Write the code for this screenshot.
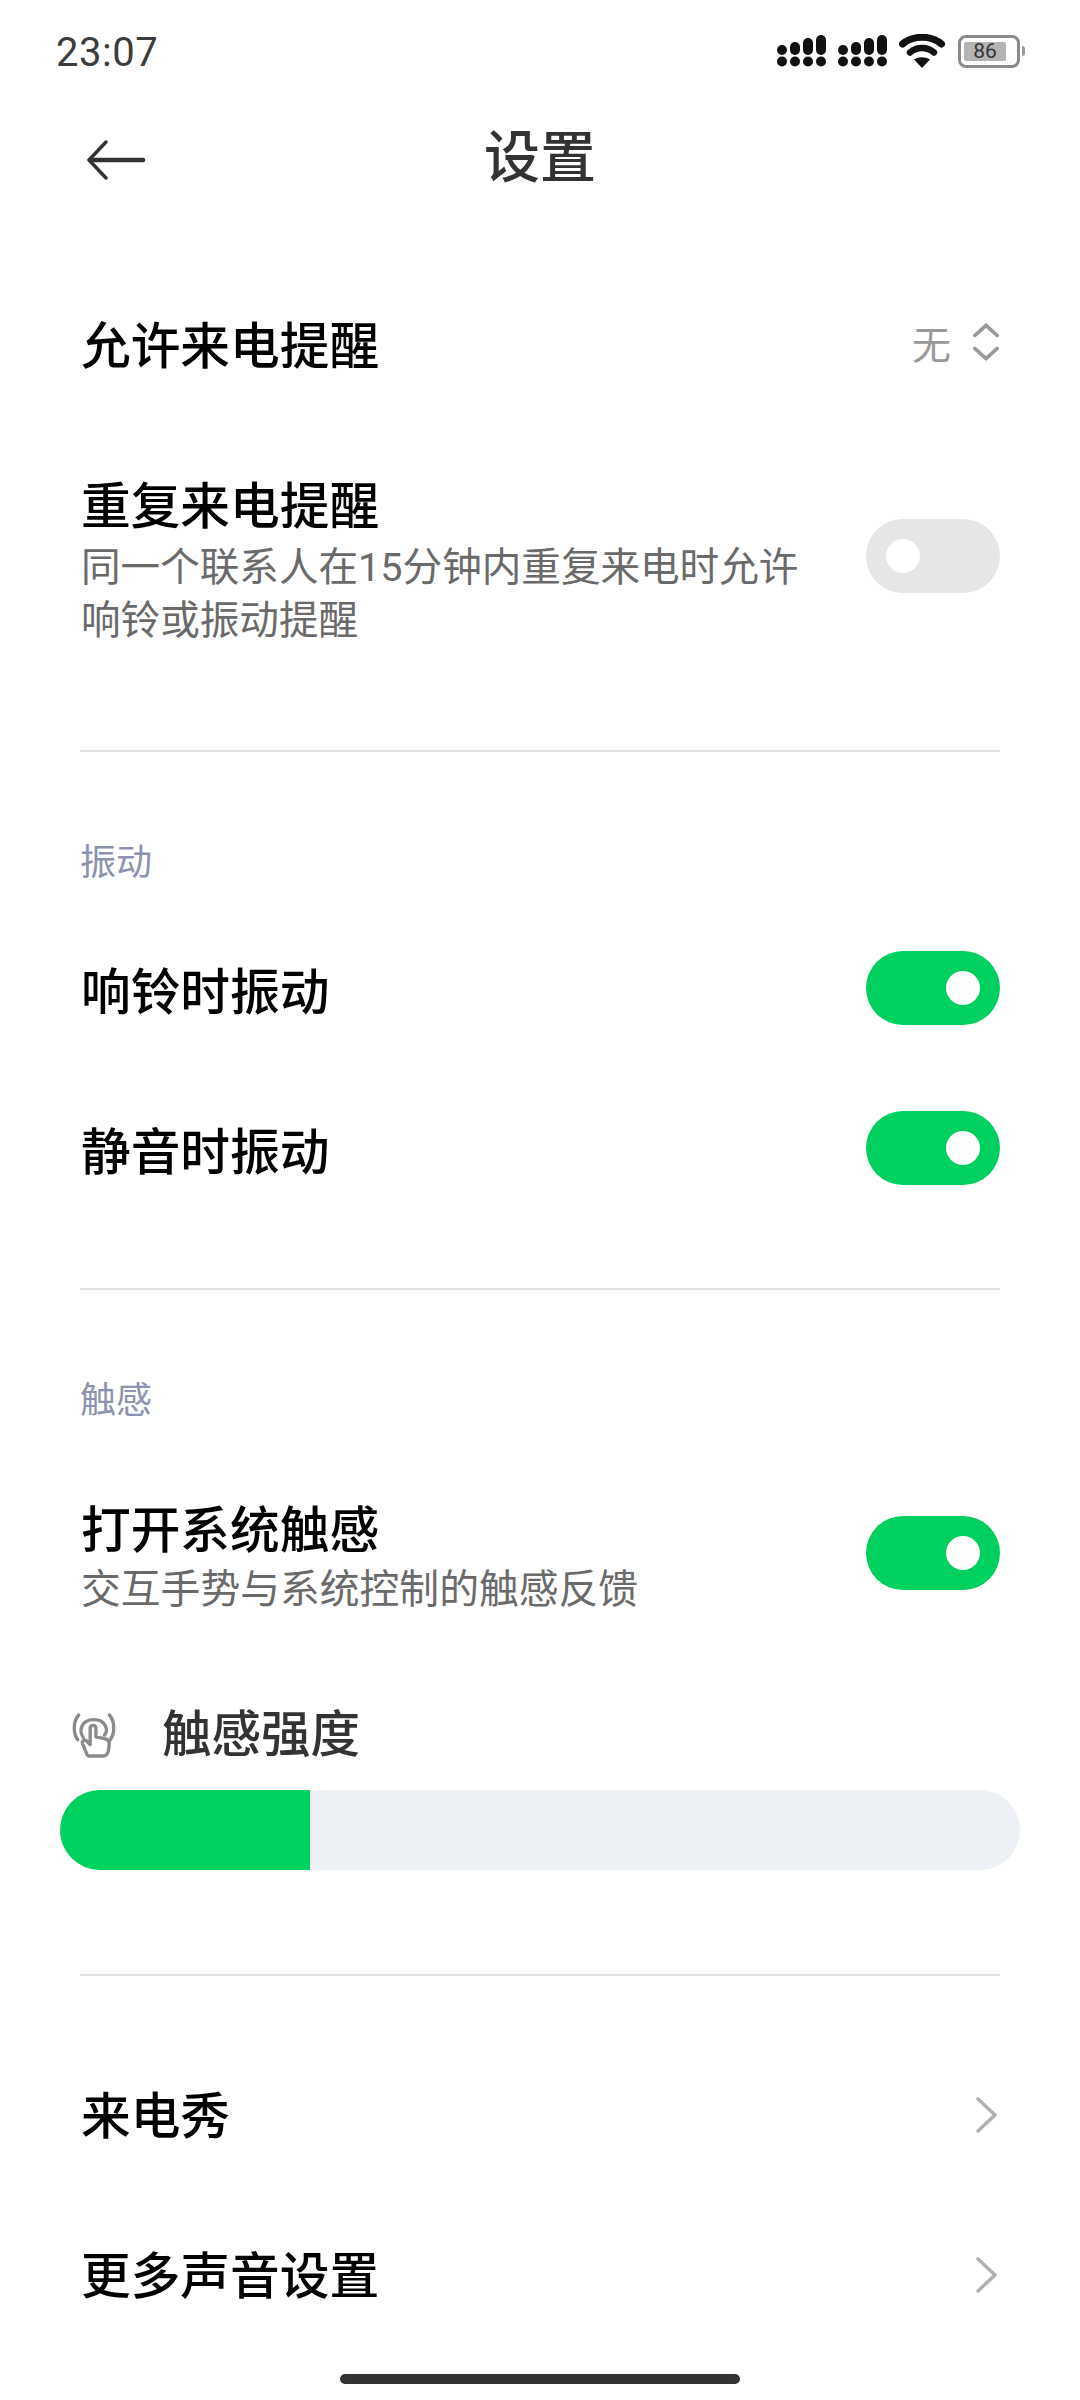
<div class="page">
  <div class="status">
    <span class="time">23:07</span>
    <div class="status-icons">
      <svg class="signal" width="49" height="32" viewBox="0 0 49 32" fill="#111">
        <rect x="0" y="10" width="10" height="10" rx="5"/><rect x="13" y="7" width="10" height="13" rx="5"/><rect x="26" y="3" width="10" height="17" rx="5"/><rect x="39" y="0" width="10" height="20" rx="5"/>
        <circle cx="5" cy="26.5" r="5"/><circle cx="18" cy="26.5" r="5"/><circle cx="31" cy="26.5" r="5"/><circle cx="44" cy="26.5" r="5"/>
      </svg>
      <svg class="signal" width="49" height="32" viewBox="0 0 49 32" fill="#111">
        <rect x="0" y="10" width="10" height="10" rx="5"/><rect x="13" y="7" width="10" height="13" rx="5"/><rect x="26" y="3" width="10" height="17" rx="5"/><rect x="39" y="0" width="10" height="20" rx="5"/>
        <circle cx="5" cy="26.5" r="5"/><circle cx="18" cy="26.5" r="5"/><circle cx="31" cy="26.5" r="5"/><circle cx="44" cy="26.5" r="5"/>
      </svg>
      <svg class="wifi" width="46" height="34" viewBox="0 0 46 34">
        <path d="M3.5 10 C14 1 32 1 42.5 10" fill="none" stroke="#111" stroke-width="7" stroke-linecap="round"/>
        <path d="M11 18.5 C18 12.5 28 12.5 35 18.5" fill="none" stroke="#111" stroke-width="6.5" stroke-linecap="round"/>
        <path d="M15 25.5 C20 22.5 26 22.5 31 25.5 L23 34 Z" fill="#111"/>
      </svg>
      <div class="battery">
        <div class="batt-body"><span class="batt-fill">86</span></div>
        <div class="batt-tip"></div>
      </div>
    </div>
  </div>

  <header class="header">
    <svg class="back" width="60" height="40" viewBox="0 0 60 40" fill="none" stroke="#333" stroke-linecap="round" stroke-linejoin="round">
      <path d="M20 2 L3 20 L20 38" stroke-width="3.4"/>
      <path d="M4 20 H57" stroke-width="4.5"/>
    </svg>
    <h1>设置</h1>
  </header>

  <section class="group first">
    <div class="row r-single">
      <span class="title">允许来电提醒</span>
      <div class="picker">
        <span class="picker-val">无</span>
        <svg width="26" height="40" viewBox="0 0 28 40" fill="none" stroke="#999" stroke-width="4" stroke-linecap="round" stroke-linejoin="round">
          <path d="M2 13 L14 2 L26 13"/><path d="M2 27 L14 38 L26 27"/>
        </svg>
      </div>
    </div>
    <div class="row r-two">
      <div class="texts">
        <div class="title">重复来电提醒</div>
        <div class="sub">同一个联系人在<span class="num">15</span>分钟内重复来电时允许<br/>响铃或振动提醒</div>
      </div>
      <div class="toggle"><i></i></div>
    </div>
  </section>

  <hr class="d1" />

  <section class="group">
    <div class="label">振动</div>
    <div class="row r-toggle">
      <span class="title">响铃时振动</span>
      <div class="toggle on"><i></i></div>
    </div>
    <div class="row r-toggle">
      <span class="title">静音时振动</span>
      <div class="toggle on"><i></i></div>
    </div>
  </section>

  <hr class="d2" />

  <section class="group">
    <div class="label">触感</div>
    <div class="row r-haptic">
      <div class="texts">
        <div class="title">打开系统触感</div>
        <div class="sub">交互手势与系统控制的触感反馈</div>
      </div>
      <div class="toggle on"><i></i></div>
    </div>
    <div class="strength">
      <svg width="44" height="48" viewBox="0 0 46 48" fill="none" stroke="#8a8a8a" stroke-width="3.5" stroke-linecap="round" stroke-linejoin="round">
        <path d="M7 3 C1 10 1 22 6 29"/>
        <path d="M39 3 C45 10 45 22 40 29"/>
        <path d="M12 27 C7 20 9 8 23 8 C36 8 38 20 34 24"/>
        <path d="M16 45 L11 33 C10 30 14 28 16 31 L19 34 V17 C19 13 25 13 25 17 V26 L35 28 C38 29 39 31 39 33 L38 41 C37 44 36 46 33 46 H17"/>
      </svg>
      <span>触感强度</span>
    </div>
    <div class="slider"><div class="fill"></div></div>
  </section>

  <hr class="d3" />

  <section class="group links">
    <div class="row r-link">
      <span class="title">来电秀</span>
      <svg width="21" height="36" viewBox="0 0 21 36" fill="none" stroke="#b0b0b0" stroke-width="3.5" stroke-linecap="round" stroke-linejoin="round"><path d="M2 2 L19 18 L2 34"/></svg>
    </div>
    <div class="row r-link">
      <span class="title">更多声音设置</span>
      <svg width="21" height="36" viewBox="0 0 21 36" fill="none" stroke="#b0b0b0" stroke-width="3.5" stroke-linecap="round" stroke-linejoin="round"><path d="M2 2 L19 18 L2 34"/></svg>
    </div>
  </section>

  <div class="home"></div>
</div>

<style>
  :global(body) { margin: 0; background: #fff; }
  .page {
    width: 1080px; height: 2400px; overflow: hidden; position: relative; background: #fff;
    font-family: "Noto Sans CJK SC", sans-serif; color: #000;
  }
  .num { font-family: Roboto, sans-serif; line-height: 1; }
  .status {
    height: 104px; display: flex; align-items: center; justify-content: space-between;
    padding: 0 55px 0 56px; box-sizing: border-box;
  }
  .time { font-family: Roboto, sans-serif; font-size: 40px; letter-spacing: 0.5px; color: #3c3c3c; }
  .status-icons { display: flex; align-items: center; gap: 11px; margin-top: -2px; }
  .signal { margin-right: 1px; }
  .battery { display: flex; align-items: center; gap: 2px; margin-left: 2px; }
  .batt-body {
    height: 27px; width: 56px; border: 3px solid #8a8a8a; border-radius: 8px; box-sizing: content-box;
    display: flex; align-items: center;
  }
  .batt-fill {
    margin-left: 3px; width: 42px; height: 19px; background: #b4b4b4; border-radius: 2px;
    font-family: Roboto, sans-serif; font-size: 21px; line-height: 19px; color: #333; text-align: center;
  }
  .batt-tip { width: 3px; height: 10px; background: #9a9a9a; border-radius: 0 3px 3px 0; }
  .header {
    height: 108px; position: relative; display: flex; align-items: center; justify-content: center;
  }
  .back { position: absolute; left: 86px; top: 36px; }
  h1 { margin: -10px 0 0; font-size: 56px; font-weight: 500; color: #333; line-height: 108px; }
  .row { display: flex; align-items: center; justify-content: space-between; padding: 0 80px 0 81px; }
  .title { font-size: 49.7px; font-weight: 500; line-height: 60px; color: #000; }
  .sub { font-size: 39.6px; line-height: 53px; color: #6a6a6a; margin-top: 5px; }
  .r-single { height: 106px; }
  .r-two { margin-top: 77px; align-items: flex-start; }
  .r-two .toggle { margin-top: 47px; }
  .picker { display: flex; align-items: center; gap: 22px; margin-right: 1px; }
  .picker-val { font-family: Roboto, "Noto Sans CJK SC", sans-serif; font-size: 39px; color: #999; }
  .toggle {
    width: 134px; height: 74px; border-radius: 37px; background: #e6e6e6; position: relative; flex: none;
  }
  .toggle i {
    position: absolute; left: 20px; top: 20px; width: 34px; height: 34px; border-radius: 50%; background: #fff;
  }
  .toggle.on { background: #00d05e; }
  .toggle.on i { left: auto; right: 20px; }
  hr { border: 0; height: 2px; background: #e5e5e5; margin: 0 80px; }
  .d1 { margin-top: 107px; }
  .label { font-size: 36px; line-height: 50px; color: #8c93b0; padding-left: 80px; }
  .group { padding-top: 82px; }
  .group.first { padding-top: 77px; }
  .r-toggle { height: 160px; }
  .label + .r-toggle { margin-top: 24px; }
  .d2 { margin-top: 60px; }
  .r-haptic { margin-top: 73px; }
  .r-haptic .sub { font-size: 39.8px; line-height: 50px; margin-top: 4px; }
  .r-haptic .title { line-height: 62px; }
  .r-haptic .toggle { margin-top: -1px; }
  .strength {
    display: flex; align-items: center; gap: 46px; padding-left: 72px; margin-top: 89px; height: 60px;
    font-size: 49.5px; font-weight: 500; color: #333;
  }
  .strength svg { margin-top: 9px; }
  .slider {
    margin: 30px 60px 0; height: 80px; border-radius: 40px; background: #edf0f5; overflow: hidden;
  }
  .fill { width: 250px; height: 100%; background: #00d05e; }
  .d3 { margin-top: 104px; }
  .r-link { height: 160px; }
  .r-link svg { margin: 6px 3px 0 0; }
  .group.links { padding-top: 56px; }
  .home {
    position: absolute; left: 340px; bottom: 16px; width: 400px; height: 10px; border-radius: 5px; background: #333;
  }
</style>
